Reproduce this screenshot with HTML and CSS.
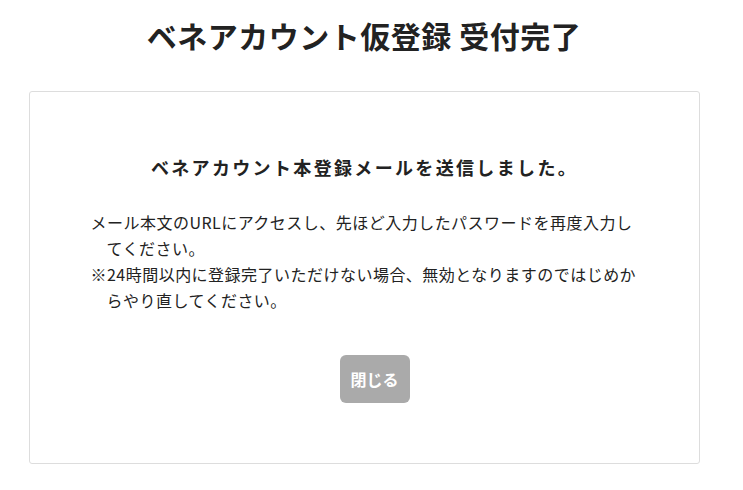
FILE: index.html
```html
<!DOCTYPE html>
<html lang="ja">
<head>
  <meta charset="UTF-8" />
  <meta name="viewport" content="width=device-width, initial-scale=1.0"/>
  <title>ベネアカウント仮登録 受付完了</title>
  <link rel="stylesheet" href="styles.css">
</head>
<body>
  <div class="page">
    <h1 class="page-title">ベネアカウント仮登録 受付完了</h1>

    <div class="card">
      <h2 class="card-title">ベネアカウント本登録メールを送信しました。</h2>

      <div class="notes">
        <p class="note">メール本文のURLにアクセスし、先ほど入力したパスワードを再度入力してください。</p>
        <p class="note">※24時間以内に登録完了いただけない場合、無効となりますのではじめからやり直してください。</p>
      </div>

      <div class="actions">
        <button class="btn-close" type="button">閉じる</button>
      </div>
    </div>
  </div>
</body>
</html>
```

FILE: styles.css
```css
body { margin: 0; background: #fff; color: #222; font-family: "Noto Sans CJK JP", "Noto Sans", sans-serif; }
.page { width: 728px; padding-top: 13px; }
.page-title { margin: 0 0 33px; text-align: center; font-size: 30px; line-height: 45px; font-weight: bold; letter-spacing: 0.5px; color: #222; }
.card { margin: 0 28px 0 29px; border: 1px solid #ddd; border-radius: 3px; padding: 62px 0 60px; }
.card-title { margin: 0 0 28px; text-align: center; font-size: 18px; line-height: 27px; font-weight: bold; letter-spacing: 0.13em; color: #222; }
.notes { width: 548px; margin: 0 auto; }
.note { margin: 0; font-size: 16px; line-height: 26px; letter-spacing: 0.03em; padding-left: 1em; text-indent: -1em; color: #222; }
.actions { margin-top: 42px; padding-left: 20px; text-align: center; }
.btn-close { width: 70px; height: 48px; border: none; border-radius: 6px; background: #aaa; color: #fff; font-family: inherit; font-size: 16px; font-weight: bold; cursor: pointer; }
```
